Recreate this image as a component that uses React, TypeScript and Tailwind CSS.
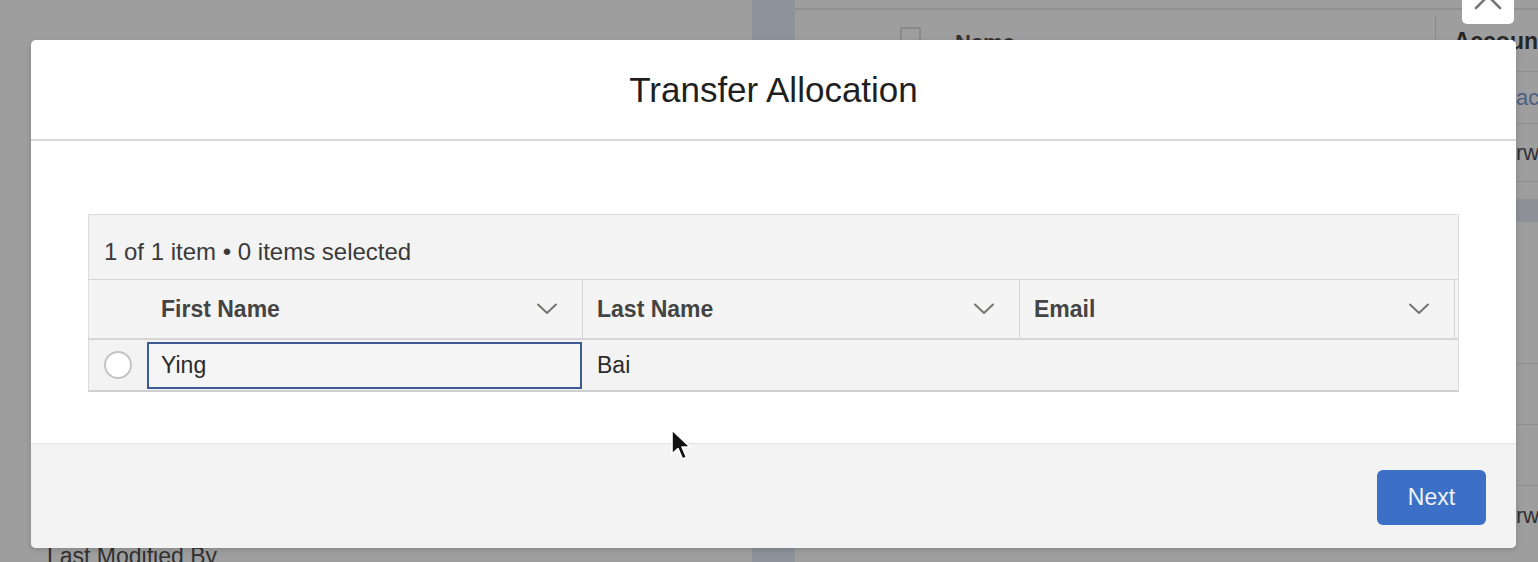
import React from 'react';

const Chevron: React.FC = () => (
  <svg width="22" height="14" viewBox="0 0 22 14" fill="none" className="shrink-0">
    <path d="M2 2.5 L11 11 L20 2.5" stroke="#76746f" strokeWidth="2" strokeLinecap="round" strokeLinejoin="round" />
  </svg>
);

const HeaderCell: React.FC<{ label: string; first?: boolean; last?: boolean }> = ({ label, first, last }) => (
  <div className={`flex items-center justify-between pl-[14px] pr-[24px] border-[#d6d6d6] ${first ? '' : 'border-l'} ${last ? 'border-r' : ''}`}>
    <span className="font-bold text-[23px] text-[#444444]">{label}</span>
    <Chevron />
  </div>
);

export default function App() {
  return (
    <div className="relative h-[562px] w-[1538px] overflow-hidden bg-[#9e9e9e] font-['Liberation_Sans',Arial,sans-serif]">
      {/* dimmed page behind the modal */}
      <div className="flex h-full">
        <div className="w-[752px] pl-[47px] pt-[545px]">
          <span className="text-[23px] leading-[23px] text-[#303030] whitespace-nowrap">Last Modified By</span>
        </div>
        <div className="w-[43px] bg-[#8d929b]" />
        <div className="flex-1 flex flex-col">
          <div className="h-[10px] border-b-2 border-[#909090]" />
          <div className="h-[62px] flex items-start border-b border-[#8f8f8f]">
            <div className="ml-[105px] mt-[17px] w-[21px] h-[19px] border-2 border-[#8a8a8a] rounded-[2px]" />
            <span className="ml-[34px] mt-[16px] text-[22px] font-bold text-[#333]">Name</span>
            <div className="ml-auto mt-[6px] w-px h-[26px] bg-[#8a8a8a]" />
            <span className="ml-[18px] mt-[14px] text-[23px] font-bold text-[#262626] whitespace-nowrap">Accoun</span>
          </div>
          <div className="h-[52px] flex items-center justify-end border-b border-[#8f8f8f] pr-0">
            <span className="text-[22px] text-[#4d5f82] w-[22px] overflow-hidden whitespace-nowrap">ac</span>
          </div>
          <div className="h-[58px] flex items-center justify-end border-b border-[#8f8f8f]">
            <span className="text-[22px] text-[#303030] w-[22px] overflow-hidden whitespace-nowrap">rw</span>
          </div>
          <div className="h-[17px]" />
          <div className="h-[23px] bg-[#8e9198]" />
          <div className="h-[142px] border-b border-[#8f8f8f]" />
          <div className="h-[61px] border-b border-[#8f8f8f]" />
          <div className="h-[61px] border-b border-[#8f8f8f]" />
          <div className="h-[58px] flex items-center justify-end">
            <span className="text-[22px] text-[#303030] w-[22px] overflow-hidden whitespace-nowrap">rw</span>
          </div>
        </div>
      </div>

      {/* close button above the modal */}
      <div className="absolute left-[1462px] top-[-28px] w-[52px] h-[52px] rounded-[5px] bg-white flex items-center justify-center">
        <svg width="30" height="30" viewBox="0 0 30 30" className="mt-[-4px]">
          <path d="M3 3 L27 27 M27 3 L3 27" stroke="#767676" strokeWidth="2.6" strokeLinecap="round" />
        </svg>
      </div>

      {/* modal */}
      <div className="absolute left-[31px] top-[40px] w-[1485px] h-[508px] rounded-[5px] bg-white shadow-[0_2px_6px_rgba(0,0,0,0.15)] flex flex-col overflow-hidden">
        <div className="h-[101px] flex items-center justify-center border-b-2 border-[#d7d7d7]">
          <h2 className="text-[35px] text-[#1f1f1f] mt-[2px]">Transfer Allocation</h2>
        </div>

        <div className="flex-1 px-[57px] pt-[73px]">
          <div className="border border-[#dcdcdc] border-b-2 border-b-[#cfcfcf] bg-[#f3f3f3]">
            <div className="h-[64px] flex items-end pl-[15px] pb-[9px]">
              <span className="text-[24px] text-[#3a3a3a]">1 of 1 item • 0 items selected</span>
            </div>
            <div className="h-[61px] grid grid-cols-[58px_435px_437px_436px] border-t border-b-2 border-[#d6d6d6] bg-[#f4f4f4]">
              <div />
              <HeaderCell label="First Name" first />
              <HeaderCell label="Last Name" />
              <HeaderCell label="Email" last />
            </div>
            <div className="h-[50px] grid grid-cols-[58px_435px_437px_436px] items-center">
              <div className="flex items-center justify-center">
                <div className="w-[28px] h-[28px] rounded-full border-2 border-[#c4c4c4] bg-white" />
              </div>
              <div className="h-[47px] flex items-center pl-[12px] border-2 border-[#3d5a94] bg-[#f5f5f5]">
                <span className="text-[23px] text-[#2b2b2b]">Ying</span>
              </div>
              <div className="pl-[15px]">
                <span className="text-[23px] text-[#2b2b2b]">Bai</span>
              </div>
              <div />
            </div>
          </div>
        </div>

        <div className="h-[105px] border-t border-[#e3e3e3] bg-[#f3f3f3] flex items-start justify-end pr-[30px] pt-[26px]">
          <button className="w-[109px] h-[55px] rounded-[6px] bg-[#3b70c6] text-[23px] text-[#eef3fb]">Next</button>
        </div>
      </div>

      {/* mouse pointer */}
      <svg className="absolute left-[670px] top-[428px]" width="22" height="34" viewBox="0 0 22 34">
        <path d="M2 2 L2 26 L8 20.5 L12.5 31 L16.5 29.2 L12 19 L20 19 Z" fill="#111" stroke="#fff" strokeWidth="1.6" strokeLinejoin="round" />
      </svg>
    </div>
  );
}
